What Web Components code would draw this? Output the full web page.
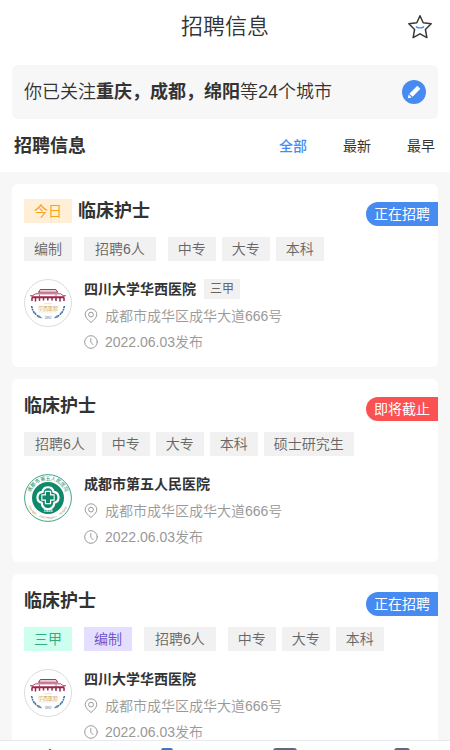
<!DOCTYPE html>
<html lang="zh-CN">
<head>
<meta charset="utf-8">
<meta name="viewport" content="width=device-width, initial-scale=1">
<title>招聘信息</title>
<style>
  :root {
    --blue: #478bf2;
    --red: #fb5152;
    --ink: #333;
    --muted: #999;
    --page: #f7f7f7;
  }
  body {
    margin: 0;
    background: #fff;
    color: var(--ink);
    font-family: "Liberation Sans", "Noto Sans CJK SC", sans-serif;
    font-size: 14px;
  }
</style>
</head>
<body>
<recruit-app></recruit-app>

<template id="t-app">
  <style>
    :host { display: flex; flex-direction: column; height: 100vh; overflow: hidden; }
    main { flex: 1; min-height: 0; display: flex; flex-direction: column; }
    job-list { flex: 1; }
  </style>
  <page-header>招聘信息</page-header>
  <main>
    <city-notice>你已关注<b>重庆，成都，绵阳</b>等24个城市</city-notice>
    <sort-bar>招聘信息</sort-bar>
    <job-list>
      <job-card status="正在招聘" logo="huaxi" hospital="四川大学华西医院">
        <job-tag slot="flag" tone="amber">今日</job-tag>
        <span slot="title">临床护士</span>
        <job-tag slot="kind">编制</job-tag>
        <job-tag slot="count">招聘6人</job-tag>
        <job-tag slot="degree">中专</job-tag>
        <job-tag slot="degree">大专</job-tag>
        <job-tag slot="degree">本科</job-tag>
        <job-tag slot="grade" small>三甲</job-tag>
      </job-card>
      <job-card status="即将截止" urgent merged logo="fifth" hospital="成都市第五人民医院">
        <span slot="title">临床护士</span>
        <job-tag slot="count">招聘6人</job-tag>
        <job-tag slot="degree">中专</job-tag>
        <job-tag slot="degree">大专</job-tag>
        <job-tag slot="degree">本科</job-tag>
        <job-tag slot="degree">硕士研究生</job-tag>
      </job-card>
      <job-card status="正在招聘" logo="huaxi" hospital="四川大学华西医院">
        <span slot="title">临床护士</span>
        <job-tag slot="kind" tone="green">三甲</job-tag>
        <job-tag slot="kind" tone="violet">编制</job-tag>
        <job-tag slot="count">招聘6人</job-tag>
        <job-tag slot="degree">中专</job-tag>
        <job-tag slot="degree">大专</job-tag>
        <job-tag slot="degree">本科</job-tag>
      </job-card>
    </job-list>
  </main>
  <bottom-nav></bottom-nav>
</template>

<template id="t-header">
  <style>
    :host { display: grid; grid-template-columns: 1fr auto 1fr; align-items: center; height: 54px; padding: 0 16px; }
    h1 { grid-column: 2; margin: 0; font-size: 22px; font-weight: 350; line-height: 32px; }
    button { justify-self: end; display: flex; border: 0; padding: 0; background: none; color: inherit; }
  </style>
  <h1><slot></slot></h1>
  <button type="button" aria-label="收藏">
    <svg width="28" height="28" viewBox="0 0 28 28" fill="none" stroke-linejoin="round" stroke-linecap="round">
      <path d="M14 2.8 L17.2 9.8 L25.2 10.7 L19.4 16.5 L20.9 24.6 L14 20.8 L7.1 24.6 L8.6 16.5 L2.8 10.7 L10.8 9.8 Z" stroke="#383838" stroke-width="1.5"/>
      <path d="M10.3 13.8 Q14 16 17.7 13.8" stroke="#478bf2" stroke-width="1.4"/>
    </svg>
  </button>
</template>

<template id="t-notice">
  <style>
    :host { display: flex; align-items: center; justify-content: space-between; margin: 11px 12px 0; padding: 0 12px; height: 54px; border-radius: 6px; background: var(--page); }
    p { margin: 0; font-size: 18px; font-weight: 350; line-height: 26px; }
    button { display: flex; border: 0; padding: 0; background: none; }
    ::slotted(b) { font-weight: 700; }
  </style>
  <p><slot></slot></p>
  <button type="button" aria-label="编辑城市">
    <svg width="24" height="24" viewBox="0 0 24 24">
      <circle cx="12" cy="12" r="12" fill="#478bf2"/>
      <path d="M15.3 5.8 L18.4 8.8 L10.6 16.7 L7.4 13.7 Z" fill="#fff"/>
      <path d="M6.7 14.6 L9.6 17.4 L5.8 18.3 Z" fill="#fff"/>
    </svg>
  </button>
</template>

<template id="t-sort">
  <style>
    :host { display: flex; align-items: center; justify-content: space-between; padding: 0 15px 0 14px; height: 53px; }
    h2 { margin: 0; font-size: 18px; font-weight: 700; line-height: 26px; }
    nav { display: flex; gap: 36px; }
    button { border: 0; padding: 0; background: none; color: inherit; font: inherit; line-height: 20px; }
    button[aria-pressed="true"] { color: var(--blue); font-weight: 500; }
  </style>
  <h2><slot></slot></h2>
  <nav aria-label="排序">
    <button type="button" aria-pressed="true">全部</button>
    <button type="button" aria-pressed="false">最新</button>
    <button type="button" aria-pressed="false">最早</button>
  </nav>
</template>

<template id="t-list">
  <style>
    :host { display: flex; flex-direction: column; gap: 12px; min-height: 0; padding: 12px; overflow: hidden; background: var(--page); }
    ::slotted(*) { flex: none; }
  </style>
  <slot></slot>
</template>

<template id="t-tag">
  <style>
    :host { display: inline-flex; align-items: center; justify-content: center; height: 24px; padding: 0 10px; background: #f1f1f1; color: #666; font-size: 14px; font-weight: 350; line-height: 20px; white-space: nowrap; }
    :host([slot="count"]) { padding: 0 11px; }
    :host([tone="amber"]) { background: #ffefd7; color: #f7a11d; font-weight: 400; }
    :host([tone="green"]) { background: #cdffee; color: #35a982; }
    :host([tone="violet"]) { background: #e5dfff; color: #6750c8; }
    :host([small]) { height: 20px; padding: 0 6px; font-size: 12px; font-weight: 400; }
  </style>
  <slot></slot>
</template>

<template id="t-card">
  <style>
    :host { display: block; position: relative; padding: 15px 12px 12px; border-radius: 6px; background: #fff; }
    header { display: flex; align-items: center; gap: 6px; height: 24px; }
    h3 { margin: 0; font-size: 18px; font-weight: 700; line-height: 24px; }
    .status { position: absolute; top: 18px; right: 0; padding: 0 8px; border-radius: 12px 0 0 12px; background: var(--blue); color: #fff; line-height: 24px; }
    :host([urgent]) .status { background: var(--red); }
    .tags { display: flex; gap: 12px; margin-top: 14px; }
    :host([merged]) .tags { gap: 6px; }
    .degrees { display: flex; gap: 6px; }
    .org { display: flex; gap: 12px; margin-top: 18px; }
    .name { display: flex; align-items: center; gap: 8px; height: 20px; margin-bottom: 4px; }
    h4 { margin: 0; font-size: 14px; font-weight: 700; line-height: 20px; }
    .line { display: flex; align-items: center; gap: 7px; margin: 0; line-height: 26px; color: var(--muted); font-weight: 350; }
    .line svg { flex: none; }
  </style>
  <header><slot name="flag"></slot><h3><slot name="title"></slot></h3></header>
  <span class="status"></span>
  <div class="tags">
    <slot name="kind"></slot>
    <slot name="count"></slot>
    <div class="degrees"><slot name="degree"></slot></div>
  </div>
  <div class="org">
    <hospital-logo></hospital-logo>
    <div>
      <div class="name"><h4></h4><slot name="grade"></slot></div>
      <p class="line">
        <svg width="14" height="16" viewBox="0 0 14 16" fill="none" stroke="#999">
          <path d="M7 14.6 C4.2 11.8 1.2 9.8 1.2 6.6 A5.8 5.8 0 0 1 12.8 6.6 C12.8 9.8 9.8 11.8 7 14.6 Z"/><circle cx="7" cy="6.6" r="2.4"/>
        </svg>
        <span>成都市成华区成华大道666号</span>
      </p>
      <p class="line">
        <svg width="14" height="14" viewBox="0 0 14 14" fill="none" stroke="#999" stroke-linecap="round">
          <circle cx="7" cy="7" r="6.3"/><path d="M6.8 3.6 V7.2 L9 9.6"/>
        </svg>
        <span>2022.06.03发布</span>
      </p>
    </div>
  </div>
</template>

<template id="t-huaxi">
  <svg width="48" height="48" viewBox="0 0 48 48" role="img" aria-label="华西医院">
    <circle cx="24" cy="24" r="23.5" fill="#fff" stroke="#dcdcdc"/>
    <g fill="none" stroke="#a63a5a">
      <path d="M16.5 10.5 H31.5 L34 13.5 M16.5 10.5 L14.5 13.5" stroke-width="1.1"/>
      <path d="M14.5 13.2 H33.5" stroke-width="1"/>
      <path d="M6 16.8 Q9 17.2 11.5 14.8 H36.5 Q39 17.2 42 16.8" stroke-width=".9"/>
      <path d="M7.5 18.3 H40.5" stroke-width="2.1" stroke="#9c2449"/>
      <path d="M17 11.8 H31" stroke-width=".6" stroke="#cf8fa1"/>
    </g>
    <path d="M8 19 V22 M11.5 19 V22.5 M15.5 19 V21.8 M19.5 19 V21.5 M23.8 19 V21.5 M28 19 V21.5 M32 19 V21.8 M36 19 V22.5 M40 19 V22" stroke="#9c2449" stroke-width="1.5"/>
    <path d="M15.5 15.5 V22 M32 15.5 V22" stroke="#6e5670" stroke-width=".8"/>
    <path d="M20.5 24.7 H27.5" stroke="#d7bd86" stroke-width=".7" stroke-dasharray="1.2 .7"/>
    <text x="24" y="30.5" text-anchor="middle" font-size="5" fill="#d09b3c" font-family="Noto Sans CJK SC, sans-serif">华西医院</text>
    <path d="M15 32.8 H33" stroke="#e3cfa5" stroke-width=".7" stroke-dasharray="1 .6"/>
    <path d="M7.6 27 C8.5 33 12.5 37.4 18 38.8 M40.4 27 C39.5 33 35.5 37.4 30 38.8" fill="none" stroke="#3b6e9e" stroke-width="1.5" stroke-dasharray="2 .7"/>
    <path d="M7 27 L9 29 M41 27 L39 29 M9.5 34 L12 34 M38.5 34 L36 34 M14.5 38.8 L15 36 M33.5 38.8 L33 36" stroke="#3b6e9e" stroke-width=".7"/>
    <text x="24" y="39.8" text-anchor="middle" font-size="3" fill="#3b6e9e" font-family="Liberation Sans, sans-serif">1892</text>
  </svg>
</template>

<template id="t-fifth">
  <svg width="48" height="48" viewBox="0 0 48 48" role="img" aria-label="成都市第五人民医院">
    <defs>
      <path id="top" d="M6.4 28.8 A18.2 18.2 0 1 1 41.6 28.8"/>
      <path id="low" d="M2.9 27 A21.4 21.4 0 0 0 45.1 27"/>
    </defs>
    <circle cx="24" cy="24" r="23.4" fill="#fff" stroke="#2a9a7c" stroke-width=".9"/>
    <circle cx="24" cy="24" r="16" fill="#10886a"/>
    <text font-size="5" fill="#168c6c" font-family="Noto Sans CJK SC, sans-serif"><textPath href="#top" startOffset="50%" text-anchor="middle">成都市第五人民医院</textPath></text>
    <g font-size="3" fill="#a58a48" font-family="Liberation Sans, sans-serif" text-anchor="middle">
      <text><textPath href="#low" startOffset="19%">Chengdu</textPath></text>
      <text><textPath href="#low" startOffset="50%">Fifth People's</textPath></text>
      <text><textPath href="#low" startOffset="80%">Hospital</textPath></text>
    </g>
    <path d="M18.5 17.8 A5.6 5.6 0 0 1 29.5 17.8 A5.6 5.6 0 0 1 30.3 28.8 A5.8 5.8 0 0 1 17.7 28.8 A5.6 5.6 0 0 1 18.5 17.8 Z" fill="#10886a" stroke="#fff" stroke-width="2.2"/>
    <path d="M24 16.8 V30.2 M17.3 23.5 H30.7" stroke="#fff" stroke-width="6.4"/>
    <path d="M24 17.9 V29.1 M18.4 23.5 H29.6" stroke="#10886a" stroke-width="4"/>
    <text x="24" y="38" text-anchor="middle" font-size="4" font-weight="700" fill="#fff" font-family="Liberation Sans, sans-serif">1939</text>
  </svg>
</template>

<template id="t-nav">
  <style>
    :host { display: block; flex: none; height: 9px; overflow: hidden; border-top: 1px solid #e9e9eb; background: #fff; }
    nav { display: flex; justify-content: space-between; padding: 7px 35px 0 37px; }
    a { display: flex; }
  </style>
  <nav aria-label="主导航">
    <a href="#home" aria-label="首页"><svg width="26" height="24" viewBox="0 0 26 24"><path d="M13 0.6 L25 11 H22 V23 H4 V11 H1 Z" fill="#62697b"/></svg></a>
    <a href="#jobs" aria-label="招聘" aria-current="page"><svg width="26" height="24" viewBox="0 0 26 24"><path d="M9 0 H17 Q19 0 19 3 H24 V22 H2 V3 H7 Q7 0 9 0 Z" fill="#3f78bd"/></svg></a>
    <a href="#messages" aria-label="消息"><svg width="26" height="24" viewBox="0 0 26 24"><path d="M4 0 H22 Q25 0 25 3 V18 H1 V3 Q1 0 4 0 Z" fill="#62697b"/></svg></a>
    <a href="#me" aria-label="我的"><svg width="26" height="24" viewBox="0 0 26 24"><path d="M8 0 H18 Q21 0 21 3 V12 H5 V3 Q5 0 8 0 Z" fill="#62697b"/></svg></a>
  </nav>
</template>

<script>
  class TemplateElement extends HTMLElement {
    constructor() {
      super();
      this.attachShadow({ mode: "open" });
      this.render(this.constructor.template);
    }
    render(id) {
      this.shadowRoot.append(document.getElementById(id).content.cloneNode(true));
    }
  }
  const define = (name, template) =>
    customElements.define(name, class extends TemplateElement { static template = template; });

  class HospitalLogo extends HTMLElement {
    constructor() {
      super();
      this.attachShadow({ mode: "open" }).innerHTML =
        "<style>:host { display: block; flex: none; width: 48px; height: 48px; } svg { display: block; }</style>";
    }
    static observedAttributes = ["name"];
    attributeChangedCallback(attr, old, value) {
      this.shadowRoot.querySelector("svg")?.remove();
      this.shadowRoot.append(document.getElementById("t-" + value).content.cloneNode(true));
    }
  }
  customElements.define("hospital-logo", HospitalLogo);

  class JobCard extends TemplateElement {
    static template = "t-card";
    connectedCallback() {
      const root = this.shadowRoot;
      root.querySelector(".status").textContent = this.getAttribute("status");
      root.querySelector("h4").textContent = this.getAttribute("hospital");
      root.querySelector("hospital-logo").setAttribute("name", this.getAttribute("logo"));
    }
  }
  customElements.define("job-card", JobCard);

  define("job-tag", "t-tag");
  define("job-list", "t-list");
  define("page-header", "t-header");
  define("city-notice", "t-notice");
  define("sort-bar", "t-sort");
  define("bottom-nav", "t-nav");
  define("recruit-app", "t-app");
</script>
</body>
</html>
